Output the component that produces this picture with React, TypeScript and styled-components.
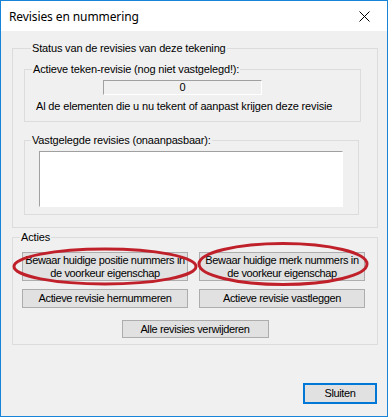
import React from "react";
import styled, { createGlobalStyle } from "styled-components";

const Global = createGlobalStyle`
  html, body { margin: 0; padding: 0; background: #ffffff; }
  * { box-sizing: border-box; }
`;

const Window = styled.div`
  position: relative;
  width: 388px;
  height: 417px;
  border: 1px solid #1883d7;
  background: #f0f0f0;
  display: flex;
  flex-direction: column;
  font-family: "Liberation Sans", Arial, sans-serif;
  font-size: 11px;
  letter-spacing: -0.16px;
  color: #000;
`;

const TitleBar = styled.div`
  height: 30px;
  background: #ffffff;
  display: flex;
  align-items: center;
  justify-content: space-between;
  padding-left: 8px;
  flex: none;
`;

const TitleText = styled.span`
  font-family: "Noto Sans", "Open Sans", sans-serif;
  font-size: 12px;
  letter-spacing: -0.1px;
  color: #000;
`;

const CloseBox = styled.div`
  width: 46px;
  height: 30px;
  display: flex;
  align-items: center;
  justify-content: center;
`;

const Body = styled.div`
  flex: 1;
  display: flex;
  flex-direction: column;
  padding: 11px 10px 0 11px;
`;

const Group = styled.fieldset<{ $mt?: number; $w: number; $pb: number; $pl?: number }>`
  margin: ${(p) => p.$mt ?? 0}px 0 0 0;
  width: ${(p) => p.$w}px;
  padding: 0 0 ${(p) => p.$pb}px ${(p) => p.$pl ?? 0}px;
  border: 1px solid #dcdcdc;
  min-width: 0;
  display: flex;
  flex-direction: column;
`;

const Legend = styled.legend<{ $ml?: number }>`
  margin-left: ${(p) => p.$ml ?? 7}px;
  padding: 0 1px;
  line-height: 13px;
  height: 13px;
`;

const ReadBox = styled.div`
  margin: 4px 0 0 78px;
  width: 159px;
  height: 15px;
  border-top: 1px solid #a0a0a0;
  border-left: 1px solid #a0a0a0;
  border-right: 1px solid #ffffff;
  border-bottom: 1px solid #ffffff;
  display: flex;
  align-items: center;
  justify-content: center;
  line-height: 13px;
`;

const Info = styled.div`
  margin: 5px 0 0 11px;
  line-height: 13px;
  white-space: nowrap;
`;

const ListBox = styled.div`
  margin: 4px 0 0 14px;
  width: 304px;
  height: 56px;
  background: #ffffff;
  border-top: 1px solid #a0a0a0;
  border-left: 1px solid #a0a0a0;
  border-right: 1px solid #ffffff;
  border-bottom: 1px solid #ffffff;
`;

const ButtonRow = styled.div<{ $mt: number }>`
  display: flex;
  gap: 11px;
  margin-top: ${(p) => p.$mt}px;
  padding-left: 9px;
`;

const CenterRow = styled.div<{ $mt: number }>`
  display: flex;
  justify-content: center;
  margin-top: ${(p) => p.$mt}px;
`;

const Button = styled.button<{ $w: number; $h: number; $default?: boolean }>`
  width: ${(p) => p.$w}px;
  height: ${(p) => p.$h}px;
  margin: 0;
  padding: 0;
  background: #e1e1e1;
  border: ${(p) => (p.$default ? "2px solid #0078d7" : "1px solid #adadad")};
  font-family: "Liberation Sans", Arial, sans-serif;
  font-size: 11px;
  letter-spacing: -0.35px;
  line-height: 13px;
  white-space: nowrap;
  color: #000;
  display: flex;
  flex-direction: column;
  align-items: center;
  justify-content: center;
  text-align: center;
`;

const Footer = styled.div`
  display: flex;
  justify-content: flex-end;
  margin-top: 38px;
`;

const Annotation = styled.svg`
  position: absolute;
  left: -1px;
  top: -1px;
  pointer-events: none;
`;

export default function App() {
  return (
    <>
      <Global />
      <Window>
        <TitleBar>
          <TitleText>Revisies en nummering</TitleText>
          <CloseBox>
            <svg width="11" height="11" viewBox="0 0 11 11">
              <path d="M0.5 0.5 L10.5 10.5 M10.5 0.5 L0.5 10.5" stroke="#000" strokeWidth="1" />
            </svg>
          </CloseBox>
        </TitleBar>
        <Body>
          <Group $w={366} $pb={12} $pl={11}>
            <Legend>Status van de revisies van deze tekening</Legend>
            <Group $mt={8} $w={337} $pb={8}>
              <Legend>Actieve teken-revisie (nog niet vastgelegd!):</Legend>
              <ReadBox>0</ReadBox>
              <Info>Al de elementen die u nu tekent of aanpast krijgen deze revisie</Info>
            </Group>
            <Group $mt={12} $w={335} $pb={7}>
              <Legend $ml={6}>Vastgelegde revisies (onaanpasbaar):</Legend>
              <ListBox />
            </Group>
          </Group>
          <Group $mt={3} $w={366} $pb={6}>
            <Legend>Acties</Legend>
            <ButtonRow $mt={8}>
              <Button $w={166} $h={29}>
                <span>Bewaar huidige positie nummers in</span>
                <span>de voorkeur eigenschap</span>
              </Button>
              <Button $w={166} $h={29}>
                <span>Bewaar huidige merk nummers in</span>
                <span>de voorkeur eigenschap</span>
              </Button>
            </ButtonRow>
            <ButtonRow $mt={8}>
              <Button $w={166} $h={19}>Actieve revisie hernummeren</Button>
              <Button $w={166} $h={19}>Actieve revisie vastleggen</Button>
            </ButtonRow>
            <CenterRow $mt={12}>
              <Button $w={147} $h={18}>Alle revisies verwijderen</Button>
            </CenterRow>
          </Group>
          <Footer>
            <Button $w={74} $h={21} $default>
              Sluiten
            </Button>
          </Footer>
        </Body>
        <Annotation width="388" height="417" viewBox="0 0 388 417">
          <ellipse cx="105" cy="266.5" rx="91" ry="17.5" fill="none" stroke="#c0202a" strokeWidth="3" />
          <ellipse cx="283" cy="264" rx="84" ry="20.5" fill="none" stroke="#c0202a" strokeWidth="3" />
        </Annotation>
      </Window>
    </>
  );
}
